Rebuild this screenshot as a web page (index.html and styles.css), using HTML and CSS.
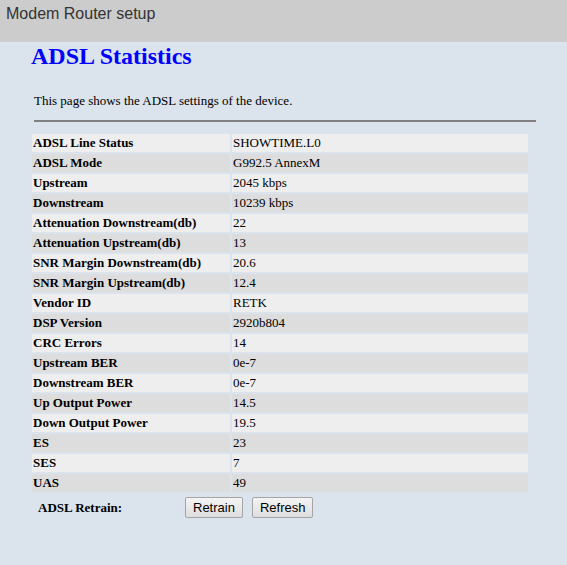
FILE: index.html
```html
<!DOCTYPE html>
<html>
<head>
<meta charset="utf-8">
<title>ADSL Statistics</title>
<link rel="stylesheet" href="styles.css">
</head>
<body>
<div class="header">Modem Router setup</div>
<div class="content">
  <h1 class="title">ADSL Statistics</h1>
  <p class="intro">This page shows the ADSL settings of the device.</p>
  <hr class="rule">
  <table class="stats">
    <tr><th>ADSL Line Status</th><td>SHOWTIME.L0</td></tr>
    <tr><th>ADSL Mode</th><td>G992.5 AnnexM</td></tr>
    <tr><th>Upstream</th><td>2045 kbps</td></tr>
    <tr><th>Downstream</th><td>10239 kbps</td></tr>
    <tr><th>Attenuation Downstream(db)</th><td>22</td></tr>
    <tr><th>Attenuation Upstream(db)</th><td>13</td></tr>
    <tr><th>SNR Margin Downstream(db)</th><td>20.6</td></tr>
    <tr><th>SNR Margin Upstream(db)</th><td>12.4</td></tr>
    <tr><th>Vendor ID</th><td>RETK</td></tr>
    <tr><th>DSP Version</th><td>2920b804</td></tr>
    <tr><th>CRC Errors</th><td>14</td></tr>
    <tr><th>Upstream BER</th><td>0e-7</td></tr>
    <tr><th>Downstream BER</th><td>0e-7</td></tr>
    <tr><th>Up Output Power</th><td>14.5</td></tr>
    <tr><th>Down Output Power</th><td>19.5</td></tr>
    <tr><th>ES</th><td>23</td></tr>
    <tr><th>SES</th><td>7</td></tr>
    <tr><th>UAS</th><td>49</td></tr>
  </table>
  <div class="retrain">
    <span class="retrain-label">ADSL Retrain:</span>
    <button class="btn" type="button">Retrain</button>
    <button class="btn" type="button">Refresh</button>
  </div>
</div>
</body>
</html>
```

FILE: styles.css
```css
html, body {
  margin: 0;
  padding: 0;
  background: #dbe3ec;
  min-height: 100%;
}
body {
  font-family: "Liberation Serif", "Times New Roman", serif;
  font-size: 13px;
  color: #000;
}
.header {
  box-sizing: border-box;
  height: 42px;
  padding: 5px 0 0 6px;
  background: #cccccc;
  font-family: "Liberation Sans", Arial, sans-serif;
  font-size: 16px;
  line-height: 18px;
  color: #333333;
}
.content {
  padding-left: 30px;
}
.title {
  margin: 0 0 0 1px;
  font-size: 24px;
  line-height: 28px;
  font-weight: bold;
  color: #0000ff;
}
.intro {
  margin: 23px 0 0 4px;
  line-height: 15px;
}
.rule {
  margin: 12px 0 0 4px;
  width: 502px;
  height: 2px;
  border: none;
  background: #808080;
}
.stats {
  margin-top: 10px;
  width: 500px;
  table-layout: fixed;
  border-collapse: separate;
  border-spacing: 2px;
}
.stats th,
.stats td {
  padding: 0 1px;
  height: 18px;
  line-height: 18px;
  text-align: left;
  vertical-align: middle;
  white-space: nowrap;
  font-size: 13px;
}
.stats th {
  width: 196px;
  font-weight: bold;
}
.stats tr:nth-child(odd) th,
.stats tr:nth-child(odd) td {
  background: #eeeeee;
}
.stats tr:nth-child(even) th,
.stats tr:nth-child(even) td {
  background: #dddddd;
}
.retrain {
  display: flex;
  align-items: center;
  margin-top: 3px;
  padding-left: 8px;
}
.retrain-label {
  width: 147px;
  font-weight: bold;
  line-height: 15px;
}
.btn {
  box-sizing: border-box;
  height: 21px;
  margin: 0 9px 0 0;
  padding: 0 7px;
  font-family: "Liberation Sans", Arial, sans-serif;
  font-size: 13px;
  line-height: 17px;
  color: #000;
  background: linear-gradient(#f4f4f4, #dedede);
  border: 1px solid #a5a5a5;
  border-radius: 2px;
}
```
